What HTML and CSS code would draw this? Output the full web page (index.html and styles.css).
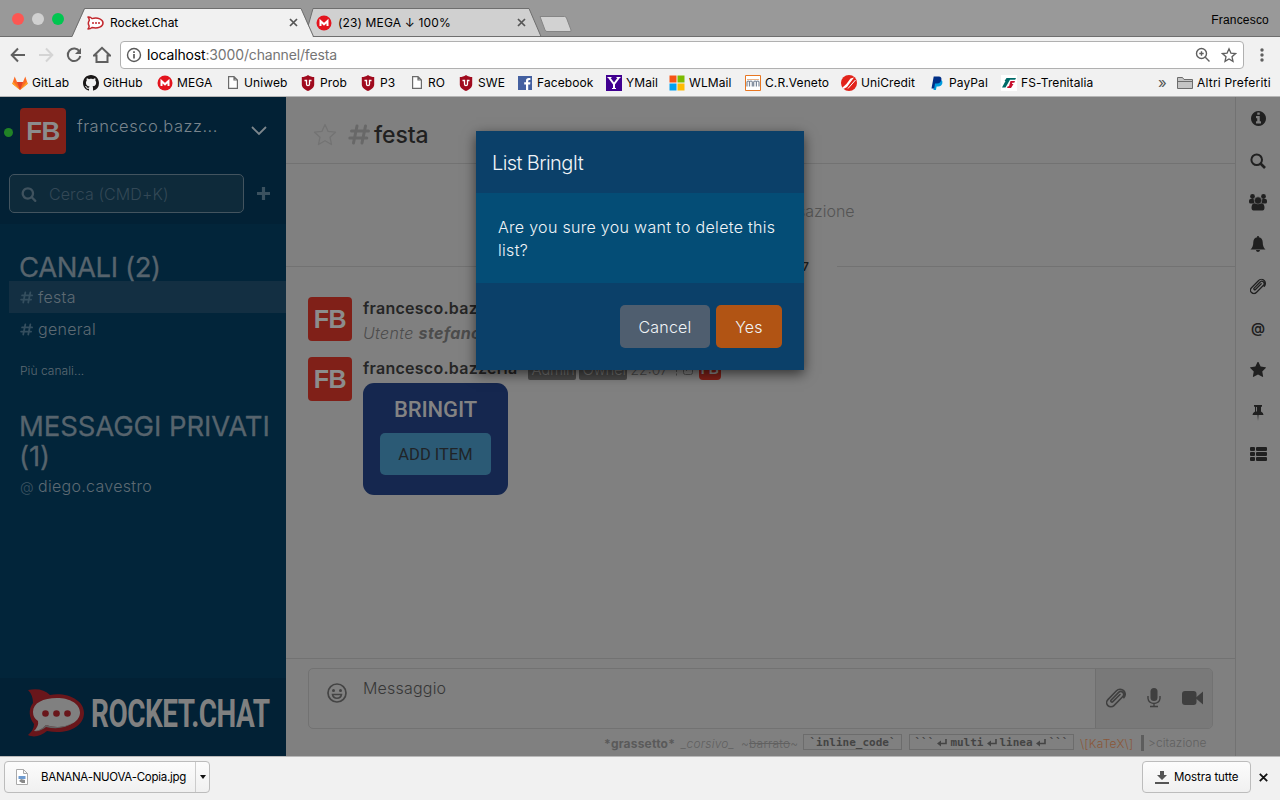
FILE: index.html
```html
<!DOCTYPE html>
<html lang="it">
<head>
<meta charset="utf-8">
<title>Rocket.Chat</title>
<link rel="stylesheet" href="styles.css">
</head>
<body>
<svg class="defs" width="0" height="0">
  <symbol id="search" viewBox="0 0 1792 1792"><path d="M1216 832q0-185-131.500-316.500t-316.500-131.500-316.500 131.500-131.500 316.500 131.500 316.500 316.500 131.500 316.500-131.500 131.500-316.500zm512 832q0 52-38 90t-90 38q-54 0-90-38l-343-342q-179 124-399 124-143 0-273.500-55.500t-225-150-150-225-55.500-273.500 55.500-273.500 150-225 225-150 273.500-55.500 273.500 55.500 225 150 150 225 55.500 273.500q0 220-124 399l343 343q37 37 37 90z"/></symbol>
  <symbol id="clip" viewBox="0 0 24 24"><path fill="none" stroke="currentColor" stroke-width="1.900" stroke-linecap="round" d="m16.800 7.800-8.600 8.600a1.400 1.400 0 0 1-2-2l9-9.200a3.500 3.500 0 0 1 5 5l-10.700 10.900a5 5 0 0 1-7.200-7.200l10.300-10.600a6 6 0 0 1 8.800 8.400"/></symbol>
  <symbol id="page" viewBox="0 0 10 13"><path fill="#fff" stroke="#6b6b6b" stroke-width="1.200" d="M.6.6h5.400l3.400 3.400v8.400H.6zM6 .6V4h3.400"/></symbol>
  <symbol id="mega" viewBox="0 0 16 16"><circle cx="8" cy="8" r="7.500" fill="#e3141e"/><path fill="none" stroke="#fff" stroke-width="2" d="M4.500 11V6l3.500 3.300L11.500 6v5"/></symbol>
  <symbol id="shield" viewBox="0 0 14 16"><path fill="#a00a1e" d="M7 0c2 1.600 4 2 6.200 2v7.500c0 3-2.700 5-6.200 6.500C3.500 14.500.8 12.500.8 9.500V2C3 2 5 1.600 7 0z"/><path fill="none" stroke="#fff" stroke-width="1.300" d="M3.500 5.500h2V9q0 1.700 1.500 1.700T8.500 9V5.500h2"/></symbol>
  <symbol id="enter" viewBox="0 0 10 9"><path fill="none" stroke="currentColor" stroke-width="1.600" d="M9 1v4.500H2.500"/><path fill="currentColor" d="M0 5.500 4 2.500v6z"/></symbol>
</svg>

<header class="tabstrip">
  <svg class="tabshapes" width="600" height="37" viewBox="0 0 600 37">
    <path fill="#d0d0d0" stroke="#6e6e6e" d="M305 37l8-28.500h216L541 36.500"/>
    <path fill="#d2d2d2" stroke="#858585" d="M540 16.500h24.500q1.500 0 2 1.500l4.500 12q.5 1.500-1 1.500h-23q-1.500 0-2-1.500l-5-13.500z"/>
    <path stroke="#6e6e6e" d="M0 36.500h600"/>
    <path fill="#f1f1f1" d="M72 37l13-28.500h216L313 37z"/>
    <path fill="none" stroke="#6e6e6e" d="M72 36.500l12.500-28h216.500L313.500 36.500"/>
  </svg>
  <div class="lights"><i class="red"></i><i class="grey"></i><i class="green"></i></div>
  <div class="tab first">
    <svg class="fav" width="17" height="14" viewBox="0 0 17 14"><path fill="#fff" stroke="#c2272d" stroke-width="1.500" stroke-linejoin="round" d="M1 1q2.500-.3 4 1.600C11 1 16 3.500 16 7s-5 6-11 4.500Q3.500 13 1 13q1.500-1.800 1-3.300Q.5 7 2.300 4.300 2.300 2.500 1 1z"/><g fill="#c2272d"><circle cx="6" cy="7" r="1"/><circle cx="9" cy="7" r="1"/><circle cx="12" cy="7" r="1"/></g></svg>
    <span>Rocket.Chat</span>
    <svg class="x" width="9" height="9" viewBox="0 0 9 9"><path d="M1 1l7 7M8 1L1 8"/></svg>
  </div>
  <div class="tab second">
    <svg class="fav" width="16" height="16"><use href="#mega"/></svg>
    <span class="wide">(23) MEGA ↓ 100%</span>
    <svg class="x" width="9" height="9" viewBox="0 0 9 9"><path d="M1 1l7 7M8 1L1 8"/></svg>
  </div>
  <span class="profile">Francesco</span>
</header>

<nav class="toolbar">
  <svg class="nav" width="16" height="16" viewBox="0 0 16 16"><path d="M15 8H2M8 1.500 1.700 8 8 14.500"/></svg>
  <svg class="nav off" width="16" height="16" viewBox="0 0 16 16"><path d="M1 8h13M8 1.500 14.300 8 8 14.500"/></svg>
  <svg class="nav" width="16" height="16" viewBox="0 0 16 16"><path d="M13.500 4.500A6.300 6.300 0 1 0 14.300 9"/><path fill="#5f5f5f" stroke="none" d="M15 1v6H9z"/></svg>
  <svg class="nav" width="18" height="18" viewBox="0 0 18 18"><path d="M1 9.500 9 1.800l8 7.700h-2.500V16h-11V9.500z"/></svg>
  <div class="omnibox">
    <svg width="16" height="16" viewBox="0 0 16 16"><circle cx="8" cy="8" r="6.500" fill="none" stroke="#5a5a5a" stroke-width="1.400"/><path stroke="#5a5a5a" stroke-width="1.700" d="M8 7v4.500M8 4.200V6"/></svg>
    <span class="url">localhost<em>:3000/channel/festa</em></span>
    <svg width="16" height="16" viewBox="0 0 16 16" fill="none" stroke="#5f5f5f" stroke-width="1.400"><circle cx="6.500" cy="6.500" r="5"/><path d="M10.300 10.300 14.500 14.500M6.500 4.300v4.400M4.300 6.500h4.400"/></svg>
    <svg class="fave" width="16" height="16" viewBox="0 0 16 16" fill="none" stroke="#5f5f5f" stroke-width="1.300"><path d="m8 1.800 1.900 4.300 4.600.5-3.500 3.100 1 4.600L8 11.900l-4 2.400 1-4.600L1.500 6.600l4.600-.5z"/></svg>
  </div>
  <svg class="dots" width="4" height="14" viewBox="0 0 4 14" fill="#5f5f5f"><circle cx="2" cy="2" r="1.700"/><circle cx="2" cy="7" r="1.700"/><circle cx="2" cy="12" r="1.700"/></svg>
</nav>

<div class="bookmarks">
  <div class="bm"><svg viewBox="0 0 16 16"><path fill="#fc6d26" d="M8 15 .3 8.800 2.700 1.500 5 7h6l2.300-5.500 2.400 7.300z"/><path fill="#e24329" d="M8 15 5 7h6z"/><path fill="#fca326" d="M8 15 .3 8.800l.9-2z M8 15l7.700-6.200-.9-2z"/></svg>GitLab</div>
  <div class="bm"><svg viewBox="0 0 16 16"><path fill="#191717" d="M8 0C3.580 0 0 3.580 0 8c0 3.540 2.290 6.530 5.470 7.590.4.070.55-.17.55-.38v-1.490c-2.010.37-2.530-.49-2.690-.94-.09-.23-.48-.94-.82-1.130-.28-.15-.68-.52-.01-.53.63-.01 1.080.58 1.230.82.720 1.210 1.870.87 2.330.66.070-.52.280-.87.510-1.070-1.780-.2-3.640-.89-3.640-3.950 0-.87.310-1.590.82-2.150-.08-.2-.36-1.020.08-2.120 0 0 .67-.21 2.200.82.640-.18 1.320-.27 2-.27s1.360.09 2 .27c1.530-1.040 2.200-.82 2.200-.82.440 1.100.160 1.920.080 2.120.510.560.820 1.270.820 2.150 0 3.070-1.870 3.750-3.650 3.950.290.250.540.730.540 1.480v2.200c0 .21.150.46.550.38A8.010 8.010 0 0 0 16 8c0-4.420-3.580-8-8-8z"/></svg>GitHub</div>
  <div class="bm"><svg viewBox="0 0 16 16"><use href="#mega"/></svg>MEGA</div>
  <div class="bm doc"><svg><use href="#page"/></svg>Uniweb</div>
  <div class="bm"><svg viewBox="0 0 16 16"><use href="#shield"/></svg>Prob</div>
  <div class="bm"><svg viewBox="0 0 16 16"><use href="#shield"/></svg>P3</div>
  <div class="bm doc"><svg><use href="#page"/></svg>RO</div>
  <div class="bm"><svg viewBox="0 0 16 16"><use href="#shield"/></svg>SWE</div>
  <div class="bm"><svg viewBox="0 0 16 16"><path fill="#4460a0" d="M1 1h14v14H1z"/><path fill="#fff" d="M9 15V9.500H7.200V7.300H9V5.800C9 4 10 3 11.700 3H13.400v2H12.300q-1.100 0-1.100 1v1.300h2.200l-.3 2.200h-1.900V15z"/></svg>Facebook</div>
  <div class="bm"><svg viewBox="0 0 16 16"><path fill="#400090" d="M0 0h16v16H0z"/><path fill="none" stroke="#fff" stroke-width="2" d="M3 2.500 8 9l5-6.500M8 8.500V14"/><path stroke="#fff" d="M1.500 2.500h4M10.500 2.500h4M6 13.500h4"/></svg>YMail</div>
  <div class="bm"><svg viewBox="0 0 16 16"><path fill="#f65314" d="M.5.500h7v7h-7z"/><path fill="#7cbb00" d="M8.500.500h7v7h-7z"/><path fill="#00a1f1" d="M.5 8.500h7v7h-7z"/><path fill="#ffbb00" d="M8.500 8.500h7v7h-7z"/></svg>WLMail</div>
  <div class="bm"><svg viewBox="0 0 16 16"><path fill="#fff" stroke="#e87722" d="M.5.500h15v15H.5z"/><path fill="none" stroke="#7b8798" stroke-width="1.200" d="M2 11.500V7q1.300-2 2.500 0v4.500M4.500 7q1.500-2 2.800 0v4.500M8.700 11.500V7q1.400-2 2.700 0v4.500M11.400 7q1.300-2 2.600 0v4.500"/><path stroke="#e8b48a" d="M2 4.500h12"/></svg>C.R.Veneto</div>
  <div class="bm"><svg viewBox="0 0 16 16"><circle cx="8" cy="8" r="8" fill="#e2231a"/><path fill="#fff" d="M1.500 12.500Q6 9 9.500 3.500l3.500-1L6 12l-3.500 2z"/><path stroke="#fff" stroke-width="1" d="M7 13.500 14.500 5"/></svg>UniCredit</div>
  <div class="bm"><svg viewBox="0 0 16 16"><path fill="#009cde" d="M5.500 5h6.800q1.700 1 1 3.500-.8 3-4.300 3H7.600L6.900 15H4.500z"/><path fill="#002f86" d="M4.700 1.500h5.200q3 .3 2.500 3.300-.6 3.700-4.400 3.700H6L5.200 13.500H2.500z"/></svg>PayPal</div>
  <div class="bm"><svg viewBox="0 0 16 16"><path fill="#fff" d="M0 0h16v16H0z"/><path fill="#006b68" d="M5.500 3H15l-.8 1.800H9L4.500 12.500H1L4.500 6H3.500z"/><path fill="#c8102e" d="M9.500 6H14l-.7 1.700h-2l-.3 1.200h1.500L10 13H6l.8-1.700H8z"/></svg>FS-Trenitalia</div>
  <span class="more">»</span>
  <div class="bm"><svg viewBox="0 0 16 14"><path fill="#c4c4c4" stroke="#6c6c6c" d="M.5 12.500v-11h5l1.500 2h8.500v9zM.5 5.500h15"/></svg>Altri Preferiti</div>
</div>

<div class="app">
  <aside class="sidebar">
    <div class="account">
      <div class="me"><i class="online"></i><div class="avatar big">FB</div><span class="name">francesco.bazz...</span>
        <svg class="chev" width="16" height="10" viewBox="0 0 16 10"><path fill="none" stroke="#7d868c" stroke-width="1.800" d="M1 1l7 7 7-7"/></svg></div>
      <div class="searchrow">
        <div class="searchbox"><svg width="16" height="16"><use href="#search"/></svg><span>Cerca (CMD+K)</span></div>
        <svg width="13" height="13" viewBox="0 0 13 13"><path stroke="#3b515f" stroke-width="3.200" d="M6.500 0v13M0 6.500h13"/></svg>
      </div>
    </div>
    <div class="rooms">
      <h3>CANALI (2)</h3>
      <div class="room active"><svg class="hash"><use href="#hashicon"/></svg>festa</div>
      <div class="room"><svg class="hash"><use href="#hashicon"/></svg>general</div>
      <div class="moreroom">Più canali...</div>
      <h3 class="pm">MESSAGGI PRIVATI (1)</h3>
      <div class="room"><span class="at">@</span>diego.cavestro</div>
    </div>
    <div class="brand">
      <svg width="286" height="78" viewBox="0 0 286 78">
        <path fill="#69161b" d="M28 12q14-3 22 5c17-3 34 5 34 18 0 14-17 22-37 18-6 5-13 7-19 4q6-5 6-11c-5-6-6-15-1-21q0-8-5-13z"/>
        <path fill="#808080" d="M33 34c0-9 10-14 24-14 13 0 23 6 23 14.500C80 43 70 49 57 49q-6 0-11-2-5 6-12 6 5-5 4-10-5-3-5-9z"/>
        <path fill="#626262" d="M34 53q6 0 12-6 15 5 28-3-12 9-28 5-6 5-12 4z"/>
        <g fill="#69161b"><circle cx="45.500" cy="35.500" r="3.300"/><circle cx="56.500" cy="35.500" r="3.300"/><circle cx="67.500" cy="35.500" r="3.300"/></g>
        <g transform="translate(91 49) scale(.735 1)"><text class="wordmark" textLength="243.500">ROCKET.CHAT</text></g>
      </svg>
    </div>
  </aside>

  <main class="room-view">
    <div class="room-head">
      <svg width="24" height="23" viewBox="0 0 24 23"><path fill="none" stroke="#737373" stroke-width="1.300" stroke-linejoin="round" d="m12 1.500 3.100 6.900 7.400.8-5.500 5 1.500 7.300L12 17.800l-6.500 3.700L7 14.200l-5.500-5 7.400-.8z"/></svg>
      <svg class="bighash" width="22" height="21"><use href="#hashicon"/></svg>
      <h2>festa</h2>
    </div>
    <div class="feed">
      <p class="start">Inizio della conversazione</p>
      <div class="day"><span>marzo 5, 2017</span></div>
      <div class="msg">
        <div class="avatar">FB</div>
        <div><div class="who"><b>francesco.bazzeria</b></div><div class="sys">Utente <b>stefano</b></div></div>
      </div>
      <div class="msg">
        <div class="avatar">FB</div>
        <div>
          <div class="who"><b>francesco.bazzeria</b><span class="tag">Admin</span><span class="tag">Owner</span><time>22:07</time><svg class="edit" width="20" height="14" viewBox="0 0 20 14" fill="none" stroke="#505050"><path stroke-dasharray="2 1.500" d="M2.500 0v14"/><rect x="9.500" y="1.500" width="9" height="10" rx="2"/><path d="m12 8 4-4"/></svg><span class="avatar mini">FB</span></div>
          <div class="bringit"><strong>BRINGIT</strong><span>ADD ITEM</span></div>
        </div>
      </div>
    </div>
    <div class="composer">
      <div class="inputbox">
        <svg class="smile" width="20" height="20" viewBox="0 0 20 20"><circle cx="10" cy="10" r="9" fill="none" stroke="#444" stroke-width="1.700"/><circle cx="6.500" cy="7.500" r="1.500"/><circle cx="13.500" cy="7.500" r="1.500"/><path fill="none" stroke="#444" stroke-width="1.500" d="M5.500 11.500h9q-.7 3.700-4.500 3.700T5.500 11.500z"/></svg>
        <span>Messaggio</span>
        <div class="actions">
          <svg width="20" height="22" viewBox="0 0 24 24"><use href="#clip"/></svg>
          <svg width="14" height="20" viewBox="0 0 14 20"><rect x="3.500" y="0" width="7" height="13" rx="3.500" fill="#3f3f3f"/><path fill="none" stroke="#3f3f3f" stroke-width="1.400" d="M1 8v2.500q.5 4.500 6 5 5.500-.5 6-5V8M7 15.500V18M3 18.500h8"/></svg>
          <svg width="21" height="16" viewBox="0 0 21 16" fill="#3f3f3f"><rect y="1" width="14.500" height="14" rx="3"/><path d="m14 7.500 7-6v13l-7-6z"/></svg>
        </div>
      </div>
      <div class="hints">
        <b class="h1">*grassetto*</b><i class="h2">_corsivo_</i><span class="h3">~<s>barrato</s>~</span><code class="h4">`inline_code`</code><code class="h5">```<svg><use href="#enter"/></svg>multi<svg><use href="#enter"/></svg>linea<svg><use href="#enter"/></svg>```</code><span class="katex">\[KaTeX\]</span><span class="quote">&gt;citazione</span>
      </div>
    </div>
  </main>

  <aside class="rail">
    <div><svg width="15" height="15" viewBox="128 128 1536 1536"><path d="M1152 1376v-160q0-14-9-23t-23-9h-96v-512q0-14-9-23t-23-9h-320q-14 0-23 9t-9 23v160q0 14 9 23t23 9h96v320h-96q-14 0-23 9t-9 23v160q0 14 9 23t23 9h448q14 0 23-9t9-23zm-128-896v-160q0-14-9-23t-23-9h-192q-14 0-23 9t-9 23v160q0 14 9 23t23 9h192q14 0 23-9t9-23zm640 416q0 209-103 385.500t-279.500 279.500-385.500 103-385.500-103-279.500-279.500-103-385.500 103-385.500 279.500-279.500 385.500-103 385.500 103 279.500 279.500 103 385.500z"/></svg></div>
    <div class="low"><svg width="16" height="16" viewBox="0 0 16 16"><circle cx="6.700" cy="6.700" r="5.300" fill="none" stroke="#202020" stroke-width="2"/><path stroke="#202020" stroke-width="2.600" d="m10.500 10.500 4.500 4.500"/></svg></div>
    <div><svg width="18" height="17" viewBox="0 0 18 17"><circle cx="3.500" cy="2.500" r="2.400"/><circle cx="14.500" cy="2.500" r="2.400"/><rect x="0" y="5" width="5.500" height="4.500" rx="1.500"/><rect x="12.500" y="5" width="5.500" height="4.500" rx="1.500"/><circle cx="9" cy="6.500" r="3.700" stroke="#808080" stroke-width=".6"/><path d="M2.500 13.500q0-3.700 3-4.300 3.500 2.300 7 0 3 .6 3 4.300 0 3-2 3h-9q-2 0-2-3z"/></svg></div>
    <div><svg width="16" height="16" viewBox="0 0 16 16"><path d="M7.200 0h1.600v1.200Q12.500 2 12.700 6c0 4 1 5.700 2.800 7.500H.5C2.300 11.700 3.300 10 3.300 6q.2-4 3.900-4.800zM5.900 14h4.200q-.4 2-2.100 2t-2.100-2z"/></svg></div>
    <div><svg width="16" height="17" viewBox="0 0 24 24"><use href="#clip"/></svg></div>
    <div class="mention">@</div>
    <div><svg width="16" height="16" viewBox="64 96 1664 1600"><path d="M1728 647q0 22-26 48l-363 354 86 500q1 7 1 20 0 21-10.500 35.500t-30.500 14.500q-19 0-40-12l-449-236-449 236q-22 12-40 12-21 0-31.500-14.500t-10.500-35.500q0-6 2-20l86-500-364-354q-25-27-25-48 0-37 56-46l502-73 225-455q19-41 49-41t49 41l225 455 502 73q56 9 56 46z"/></svg></div>
    <div class="low"><svg width="12" height="16" viewBox="0 0 12 16"><path d="M2 0h8v1.500L9 2v4.500q2.500 1 2.500 3.500h-5L6 16l-.5-6h-5Q.5 7.500 3 6.500V2l-1-.5z"/><path stroke="#777" d="M4.500 2v4.500"/></svg></div>
    <div><svg width="17" height="14" viewBox="0 0 17 14"><rect width="5" height="4" rx="1"/><rect x="6" width="11" height="4" rx="1"/><rect y="5" width="5" height="4" rx="1"/><rect x="6" y="5" width="11" height="4" rx="1"/><rect y="10" width="5" height="4" rx="1"/><rect x="6" y="10" width="11" height="4" rx="1"/></svg></div>
  </aside>

  <section class="modal">
    <h4>List BringIt</h4>
    <p>Are you sure you want to delete this list?</p>
    <footer><span class="cancel">Cancel</span><span class="yes">Yes</span></footer>
  </section>
</div>

<footer class="downloads">
  <div class="file">
    <svg width="12" height="16" viewBox="0 0 12 16"><path fill="#fff" stroke="#aaa" d="M.5.500h7l4 4v11H.5zM7.500.500v4h4"/><path fill="#6e9bd0" d="M2.500 7h7v3h-7z"/><path fill="#888" d="m3 12 2-2 4 1v3H6z"/></svg>
    <span>BANANA-NUOVA-Copia.jpg</span><i></i>
  </div>
  <div class="showall"><svg width="14" height="13" viewBox="0 0 14 13" fill="#555"><path d="M5 0h4v4h3L7 9 2 4h3zM0 11h14v2H0z"/></svg><span>Mostra tutte</span></div>
  <svg class="close" width="9" height="9" viewBox="0 0 9 9"><path stroke="#111" stroke-width="1.800" d="M.8.800l7.400 7.400M8.200.800.800 8.200"/></svg>
</footer>
<svg class="defs" width="0" height="0"><symbol id="hashicon" viewBox="0 0 22 21"><path fill="none" stroke="currentColor" stroke-width="3" stroke-linecap="round" d="M9 2 5.500 19M17.500 2 14 19M3.500 7h17M1.800 14h17"/></symbol></svg>
</body>
</html>
```
FILE: styles.css
```css
* { box-sizing: border-box; }
body { margin: 0; width: 1280px; height: 800px; overflow: hidden; display: flex; flex-direction: column; font-family: Inter, "Liberation Sans", sans-serif; font-size: 12px; color: #000; background: #f1f1f1; }
svg { display: block; flex: none; }
h2, h3, h4, p { margin: 0; }
.defs { position: absolute; }

.tabstrip { position: relative; height: 37px; background: #999; border-bottom: 1px solid #6e6e6e; display: flex; align-items: center; flex: none; }
.tabshapes { position: absolute; left: 0; top: 0; }
.lights { display: flex; gap: 8px; padding: 2px 0 0 12px; width: 87px; }
.lights i { width: 12px; height: 12px; border-radius: 50%; }
.red { background: #fc5753; }
.grey { background: #d0d0d0; }
.green { background: #00c650; }
.tab { position: relative; display: flex; align-items: center; padding-top: 9px; height: 36px; }
.tab.first { width: 229px; }
.tab.second { width: 230px; }
.fav { margin-right: 6px; }
.x { margin-left: auto; }
.first .x { margin-right: 18px; }
.second .x { margin-right: 20px; }
.x path { stroke: #555; stroke-width: 1.700; }
.tab span { font-size: 12px; }
.tab .wide { letter-spacing: .15px; }
.profile { margin-left: auto; padding: 4px 11px 0 0; font-family: "Liberation Sans", sans-serif; font-size: 12px; letter-spacing: .2px; }

.toolbar { height: 35px; display: flex; align-items: center; padding: 1px 0 0 10px; flex: none; }
.nav { margin-right: 12px; }
.nav path { fill: none; stroke: #5f5f5f; stroke-width: 2; }
.nav path[stroke="none"] { fill: #5f5f5f; stroke: none; }
.nav.off path { stroke: #d4d4d4; }
.toolbar .nav:nth-child(4) { margin: 0 9px 0 -1px; }
.omnibox { width: 1124px; height: 28px; border: 1px solid #b0b0b0; border-radius: 4px; background: #fff; display: flex; align-items: center; padding: 0 6px 0 5px; }
.url { margin: 0 auto 0 5px; font-size: 14px; letter-spacing: -.15px; line-height: 18px; padding-bottom: 1px; }
.url em { font-style: normal; color: #757575; }
.fave { margin-left: 10px; }
.dots { margin-left: 16px; }

.bookmarks { height: 25px; border-bottom: 1px solid #b6b6b6; display: grid; grid-template-columns: 71px 74px 69px 74px 60px 50px 48px 59px 89px 63px 76px 96px 88px 72px 157px 19px 1fr; align-items: center; padding: 0 0 3px 12px; flex: none; letter-spacing: .1px; }
.bm { display: flex; align-items: center; gap: 4px; white-space: nowrap; }
.bm svg { width: 16px; height: 16px; }
.bm:last-child { letter-spacing: .2px; }
.bm.doc { gap: 6px; padding-left: 2px; }
.bm.doc svg { width: 10px; height: 13px; }
.more { font-size: 15px; color: #555; line-height: 16px; }

.app { position: relative; height: 659px; display: flex; background: #808080; flex: none; }
.sidebar { width: 286px; background: #02253a; display: flex; flex-direction: column; color: #5d6a73; }
.account { height: 127px; background: #022135; }
.me { display: flex; padding: 11px 19px 0 4px; height: 77px; align-items: flex-start; }
.online { width: 9px; height: 9px; border-radius: 50%; background: #218326; margin: 20px 7px 0 0; }
.avatar { width: 44px; height: 44px; border-radius: 4px; background: #802018; color: #8c8c8c; font: bold 25px/44px "Liberation Sans", sans-serif; letter-spacing: -.5px; text-align: center; flex: none; }
.avatar.big { width: 46px; height: 46px; line-height: 46px; font-size: 26px; }
.name { margin-left: 11px; font-size: 16.500px; font-weight: 300; line-height: 36px; letter-spacing: .5px; color: #79858d; }
.chev { margin: 18px 0 0 auto; }
.searchrow { display: flex; align-items: center; gap: 13px; padding-left: 9px; }
.searchbox { width: 235px; height: 39px; border: 1px solid #43545f; border-radius: 5px; background: #0e2a3a; display: flex; align-items: center; gap: 12px; padding-left: 11px; color: #334856; font-size: 16px; font-weight: 300; letter-spacing: .1px; }
.searchbox svg { fill: #3f525e; }
.rooms { padding: 28px 0 0 9px; flex: 1; }
.rooms h3 { font-size: 27.500px; font-weight: 400; line-height: 30px; letter-spacing: -.4px; padding: 0 0 0 10px; height: 29px; color: #57646d; -webkit-text-stroke: .3px #57646d; }
.rooms .pm { height: 61px; margin-top: 28px; letter-spacing: -.1px; }
.room { display: flex; align-items: center; height: 32px; padding-left: 11px; font-size: 16px; font-weight: 300; letter-spacing: .3px; }
.room.active { background: #132f42; }
.hash { width: 13px; height: 13px; margin-right: 5px; color: #344e5e; }
.at { width: 18px; color: #3d5462; letter-spacing: 0; font-size: 14px; }
.moreroom { padding: 17px 0 0 11px; height: 38px; font-size: 12px; font-weight: 300; letter-spacing: .05px; line-height: 17px; }
.pm + .room { height: 28px; }
.brand { height: 78px; background: #022135; }
.wordmark { font: bold 38px Roboto, sans-serif; fill: #808080; }

.room-view { width: 950px; border-right: 1px solid #727272; display: flex; flex-direction: column; }
.room-head { height: 67px; border-bottom: 1px solid #727272; display: flex; align-items: center; padding: 8px 0 0 27px; }
.bighash { margin: 0 4px 0 11px; color: #686868; }
.room-head h2 { padding-top: 2px; font-size: 23px; font-weight: 500; letter-spacing: -.1px; color: #202020; }
.feed { flex: 1; }
.start { text-align: center; margin-top: 36px; padding-right: 4px; font-size: 16px; font-weight: 300; line-height: 22px; color: #545454; }
.day { display: flex; align-items: center; margin-top: 34px; height: 20px; font-size: 12px; font-weight: 600; color: #222; }
.day::before, .day::after { content: ""; flex: 1; height: 1px; background: #727272; }
.day span { width: 153px; text-align: right; padding: 0 28px 0 0; white-space: nowrap; }
.msg { display: flex; gap: 11px; padding: 0 22px; height: 60px; }
.day + .msg { margin-top: 21px; }
.who { display: flex; height: 22px; margin-bottom: 2px; align-items: center; font-size: 16px; color: #262626; }
.who b { font-weight: 600; letter-spacing: .27px; }
.sys { font-size: 16px; font-weight: 300; font-style: italic; color: #4c4c4c; line-height: 25px; letter-spacing: .35px; }
.sys b { font-weight: 700; }
.tag { margin: 3px 0 0 3px; font-size: 15px; line-height: 20px; padding: 0 4px; border-radius: 2px; background: #484848; color: #777; font-weight: 300; width: 48px; text-align: center; letter-spacing: -.3px; }
b + .tag { margin-left: 10px; }
.who time { font-size: 14px; font-weight: 300; margin: 3px 6px 0 4px; width: 37px; color: #484848; }
.avatar.mini { width: 22px; height: 22px; font-size: 14px; line-height: 22px; margin: 1px 0 0 5px; }
.edit { margin-top: 3px; }
.bringit { width: 145px; height: 112px; margin-top: 4px; border-radius: 11px; background: #15274f; display: flex; flex-direction: column; align-items: center; padding-top: 12px; }
.bringit strong { font: 500 22px/29px Roboto, sans-serif; letter-spacing: -.1px; color: #838383; }
.bringit span { margin-top: 9px; width: 111px; height: 42px; border-radius: 5px; background: #2b5a75; color: #202428; font: 400 16.500px/43px Roboto, sans-serif; text-align: center; }

.composer { height: 98px; border-top: 1px solid #727272; padding: 9px 22px 0; }
.inputbox { height: 61px; border: 1px solid #727272; border-radius: 5px; display: flex; padding-left: 18px; }
.smile { margin-top: 14px; fill: #444; }
.inputbox > span { margin-left: 16px; padding-top: 8px; font-size: 16px; line-height: 22px; font-weight: 300; letter-spacing: .2px; color: #373737; }
.actions { margin-left: auto; width: 117px; border-left: 1px solid #6f6f6f; background: #797979; display: flex; align-items: center; justify-content: space-between; padding: 0 9px 2px 10px; color: #3f3f3f; border-radius: 0 4px 4px 0; }
.hints { display: flex; height: 28px; align-items: center; justify-content: flex-end; padding-right: 7px; font-size: 12px; color: #616161; white-space: nowrap; letter-spacing: .2px; }
.h1 { width: 77px; color: #5a5a5a; }
.h2 { width: 60px; font-weight: 300; }
.h3 { width: 62px; font-weight: 300; }
.hints i, .hints span { font-weight: 300; }
.hints code { margin-top: -2px; height: 16px; border: 1px solid #6c6c6c; font: bold 11px/13px "DejaVu Sans Mono", monospace; letter-spacing: 0; color: #444; display: flex; justify-content: center; align-items: center; }
.h4 { width: 99px; margin-right: 7px; }
.h5 { width: 165px; margin-right: 6px; gap: 3px; }
.h5 svg { width: 10px; height: 9px; }
.hints .katex { color: #8a5738; width: 61px; }
.hints .quote { border-left: 3px solid #5d5d5d; padding-left: 4px; line-height: 16px; width: 65px; letter-spacing: .05px; }

.rail { width: 44px; display: flex; flex-direction: column; align-items: center; fill: #202020; color: #202020; }
.rail div { height: 42px; display: flex; align-items: center; justify-content: center; }
.rail .low { padding-top: 2px; }
.rail .mention { font-size: 14px; font-weight: 600; padding-bottom: 2px; }

.modal { position: absolute; left: 476px; top: 34px; width: 328px; height: 239px; background: #0b4069; color: #f0f4f7; box-shadow: 0 4px 12px rgba(0, 0, 0, .6); }
.modal h4 { height: 62px; padding-left: 16px; font-size: 20px; font-weight: 300; line-height: 64px; letter-spacing: -.6px; }
.modal p { height: 90px; background: #044d76; padding: 23px 22px; font-size: 16px; font-weight: 300; line-height: 23px; letter-spacing: .3px; }
.modal footer { display: flex; justify-content: flex-end; gap: 6px; padding: 22px 22px 0 0; font-size: 16px; font-weight: 300; letter-spacing: .2px; }
.modal footer span { height: 43px; line-height: 44px; border-radius: 5px; text-align: center; }
.cancel { width: 90px; background: #4f5e6f; }
.yes { width: 66px; background: #b15414; }

.downloads { height: 44px; border-top: 1px solid #b9b9b9; background: #f1f1f1; display: flex; align-items: flex-start; padding: 4px 12px 0 4px; }
.file, .showall { height: 32px; border: 1px solid #bcbcbc; border-radius: 4px; background: linear-gradient(#fcfcfc, #f0f0f0); display: flex; align-items: center; font-size: 11.500px; }
.file { width: 206px; padding-left: 11px; }
.file span { margin-left: 13px; width: 155px; line-height: 30px; border-right: 1px solid #ccc; letter-spacing: -.27px; }
.file i { margin-left: 4px; border: 3px solid transparent; border-top: 4px solid #111; border-bottom: 0; }
.showall { margin-left: auto; width: 109px; padding-left: 12px; gap: 5px; letter-spacing: -.1px; }
.close { margin: 12px 0 0 8px; }
```
